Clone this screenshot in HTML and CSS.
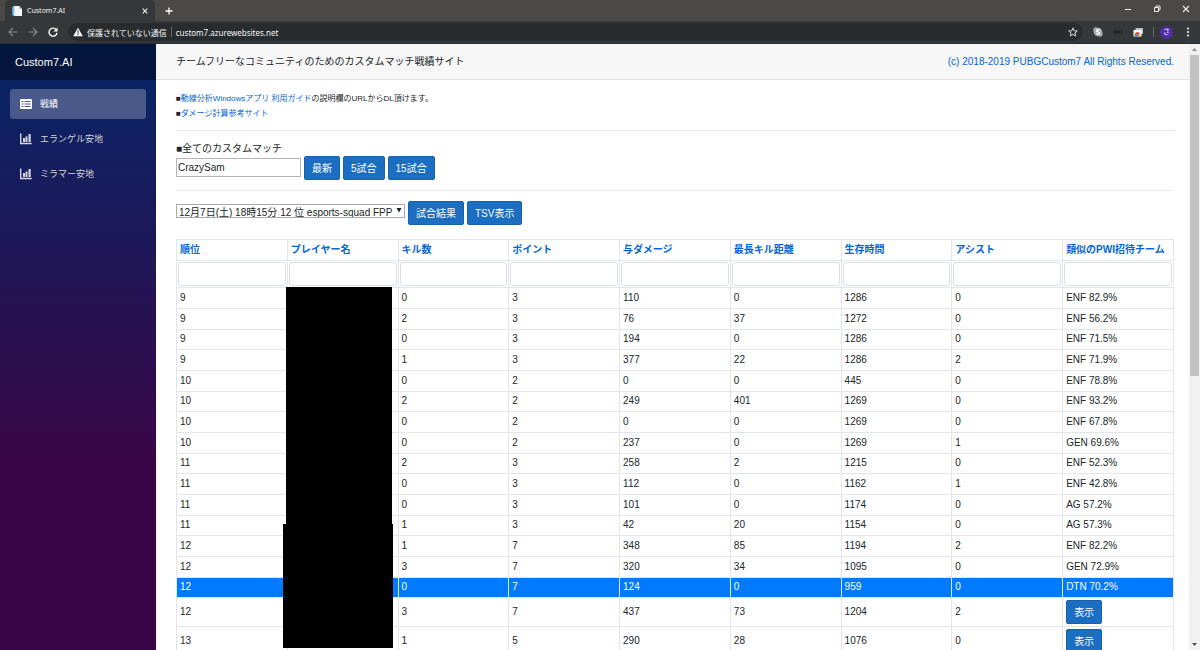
FILE: index.html
```html
<!DOCTYPE html>
<html lang="ja">
<head>
<meta charset="utf-8">
<title>Custom7.AI</title>
<link rel="stylesheet" href="styles.css">
</head>
<body>
<header class="browser">
  <div class="tabstrip">
    <div class="tab">
      <svg class="favicon" viewBox="0 0 12 12"><path d="M1 2l3-1v10l-3-1z" fill="#4f9fd8"/><path d="M3 1h5l3 3v7H3z" fill="#f2f5f7"/><path d="M8 1l3 3H8z" fill="#b9c3ca"/><path d="M3 1v10" stroke="#a9cbe4"/></svg>
      <span class="tab-title">Custom7.AI</span>
      <button class="plain" aria-label="タブを閉じる"><svg class="icon-s" viewBox="0 0 8 8"><path d="M1.7 1.7l4.6 4.6M6.3 1.7L1.7 6.3" stroke="#eee" stroke-width="1.1"/></svg></button>
    </div>
    <button class="plain newtab" aria-label="新しいタブ"><svg class="icon-s" viewBox="0 0 8 8"><path d="M4 .5v7M.5 4h7" stroke="#fff" stroke-width="1.3"/></svg></button>
    <div class="window-buttons">
      <button class="plain" aria-label="最小化"><svg class="icon-s" viewBox="0 0 8 8"><path d="M1 4.5h6" stroke="#eee"/></svg></button>
      <button class="plain" aria-label="元に戻す"><svg class="icon-s" viewBox="0 0 8 8"><path d="M1.5 2.5h4v4h-4zM3 2.500V1h4v4H5.500" fill="none" stroke="#eee"/></svg></button>
      <button class="plain" aria-label="閉じる"><svg class="icon-s" viewBox="0 0 8 8"><path d="M1 1l6 6M7 1L1 7" stroke="#eee" stroke-width="1.1"/></svg></button>
    </div>
  </div>
  <div class="toolbar">
    <button class="plain" aria-label="戻る"><svg class="icon-m" viewBox="0 0 10 10"><path d="M9.500 5H1.200M5 1L1 5l4 4" fill="none" stroke="#85888b" stroke-width="1.1"/></svg></button>
    <button class="plain" aria-label="進む"><svg class="icon-m" viewBox="0 0 10 10"><path d="M.5 5h8.300M5 1l4 4-4 4" fill="none" stroke="#85888b" stroke-width="1.1"/></svg></button>
    <button class="plain" aria-label="再読み込み"><svg class="icon-m" viewBox="0 0 10 10"><path d="M8.300 2.800A4 4 0 1 0 9 5.800" fill="none" stroke="#fff" stroke-width="1.400"/><path d="M9.500.6v4H5.500z" fill="#fff"/></svg></button>
    <div class="address">
      <svg class="icon-m" viewBox="0 0 10 10"><path d="M5 .7L9.800 9.200H.2z" fill="#fff"/><path d="M5 3.600v2.800M5 7.100v1.200" stroke="#292c2f" stroke-width="1.100"/></svg>
      <span class="insecure">保護されていない通信</span>
      <span class="divider"></span>
      <span class="url">custom7.azurewebsites.net</span>
      <button class="plain star" aria-label="ブックマーク"><svg class="icon-m" viewBox="0 0 10 10"><path d="M5 .9l1.200 2.900 3.100.2-2.400 2 .8 3L5 7.400 2.300 9l.8-3L.7 4l3.100-.2z" fill="none" stroke="#e8eaed" stroke-width=".9"/></svg></button>
    </div>
    <div class="extensions">
      <svg class="icon-m" viewBox="0 0 10 10"><circle cx="3" cy="3" r="2.700" fill="#a9a9a9"/><circle cx="7" cy="7" r="2.700" fill="#a9a9a9"/><circle cx="5" cy="5" r="4.300" fill="#a9a9a9"/><path d="M6.700 3.300C5.500 2.300 3.400 2.700 3.500 3.900c.1 1.300 3.100.8 3.100 2.200 0 1.200-2.200 1.400-3.300.4" fill="none" stroke="#fff" stroke-width="1.300"/></svg>
      <svg class="icon-m" viewBox="0 0 10 10"><g fill="none" stroke="#17191b"><path d="M2 2.500Q.3 5 2 7.500M8 2.500Q9.700 5 8 7.500M3.700 3.500Q2.700 5 3.700 6.500M6.300 3.500Q7.300 5 6.300 6.500"/></g><circle cx="5" cy="5" r=".9" fill="#17191b"/></svg>
      <svg class="icon-m" viewBox="0 0 10 10"><path d="M2.500 1H10v6H2.500z" fill="#bfc2c4"/><path d="M.5 3H8.500v6.500h-8z" fill="#fff"/><path d="M2 9.500a2.500 2.500 0 0 1 0-3L4.300 8z" fill="#4a9d55"/><path d="M1.800 6.800a2.800 2.800 0 0 1 5.200 0L4.300 8z" fill="#e04a3d"/><path d="M7 6.800a2.800 2.800 0 0 1 0 2.700H4.300V8z" fill="#f0c13f"/><circle cx="4.400" cy="8.200" r="1.200" fill="#4a80e0"/></svg>
      <span class="divider"></span>
      <span class="avatar">さ</span>
      <svg class="icon-m" viewBox="0 0 10 10"><g fill="#fff"><circle cx="5" cy="1.500" r="1"/><circle cx="5" cy="5" r="1"/><circle cx="5" cy="8.500" r="1"/></g></svg>
    </div>
  </div>
</header>
<div class="app">
  <aside class="sidebar">
    <a class="brand" href="#">Custom7.AI</a>
    <nav class="menu">
      <a class="menu-item active" href="#"><svg class="menu-icon" viewBox="0 0 12 12"><rect y="1" width="12" height="10" rx="1" fill="#fff"/><path d="M1.500 3.500h2M1.500 6h2M1.500 8.500h2M4.500 3.500h6M4.500 6h6M4.500 8.500h6" stroke="#4c5a8c" stroke-width="1.100"/></svg>戦績</a>
      <a class="menu-item" href="#"><svg class="menu-icon" viewBox="0 0 12 12"><path d="M.7.500v10h11" fill="none" stroke="#d7d7e0" stroke-width="1.400"/><path d="M3 5h2V9H3zM5.500 3.500h2V9h-2zM8.500 1h2.200v8H8.500z" fill="#d7d7e0"/></svg>エランゲル安地</a>
      <a class="menu-item" href="#"><svg class="menu-icon" viewBox="0 0 12 12"><path d="M.7.500v10h11" fill="none" stroke="#d7d7e0" stroke-width="1.400"/><path d="M3 5h2V9H3zM5.500 3.500h2V9h-2zM8.500 1h2.200v8H8.500z" fill="#d7d7e0"/></svg>ミラマー安地</a>
    </nav>
  </aside>
  <main class="main">
    <div class="top-row"><span>チームフリーなコミュニティのためのカスタムマッチ戦績サイト</span><a href="#">(c) 2018-2019 PUBGCustom7 All Rights Reserved.</a></div>
    <div class="content">
      <div class="notes">
        <p>■<a href="#">動線分析Windowsアプリ 利用ガイド</a>の説明欄のURLからDL頂けます。</p>
        <p>■<a href="#">ダメージ計算参考サイト</a></p>
      </div>
      <section class="search">
        <label for="player">■全てのカスタムマッチ</label>
        <div class="controls">
          <input class="player" id="player" type="text" value="CrazySam">
          <button class="btn">最新</button>
          <button class="btn">5試合</button>
          <button class="btn">15試合</button>
        </div>
      </section>
      <section class="match">
        <div class="select-box">
          <select aria-label="試合"><option>12月7日(土) 18時15分 12 位 esports-squad FPP</option></select>
          <svg class="arrow" viewBox="0 0 6 6"><path d="M.5 1h5L3 5.500z" fill="#222"/></svg>
        </div>
        <button class="btn">試合結果</button>
        <button class="btn">TSV表示</button>
      </section>
      <div class="grid">
        <table>
          <thead>
            <tr><th><a href="#">順位</a></th><th><a href="#">プレイヤー名</a></th><th><a href="#">キル数</a></th><th><a href="#">ポイント</a></th><th><a href="#">与ダメージ</a></th><th><a href="#">最長キル距離</a></th><th><a href="#">生存時間</a></th><th><a href="#">アシスト</a></th><th><a href="#">類似のPWI招待チーム</a></th></tr>
            <tr class="filters"><td><input aria-label="順位"></td><td><input aria-label="プレイヤー名"></td><td><input aria-label="キル数"></td><td><input aria-label="ポイント"></td><td><input aria-label="与ダメージ"></td><td><input aria-label="最長キル距離"></td><td><input aria-label="生存時間"></td><td><input aria-label="アシスト"></td><td><input aria-label="類似のPWI招待チーム"></td></tr>
          </thead>
          <tbody>
            <tr><td>9</td><td></td><td>0</td><td>3</td><td>110</td><td>0</td><td>1286</td><td>0</td><td>ENF 82.9%</td></tr>
            <tr><td>9</td><td></td><td>2</td><td>3</td><td>76</td><td>37</td><td>1272</td><td>0</td><td>ENF 56.2%</td></tr>
            <tr><td>9</td><td></td><td>0</td><td>3</td><td>194</td><td>0</td><td>1286</td><td>0</td><td>ENF 71.5%</td></tr>
            <tr><td>9</td><td></td><td>1</td><td>3</td><td>377</td><td>22</td><td>1286</td><td>2</td><td>ENF 71.9%</td></tr>
            <tr><td>10</td><td></td><td>0</td><td>2</td><td>0</td><td>0</td><td>445</td><td>0</td><td>ENF 78.8%</td></tr>
            <tr><td>10</td><td></td><td>2</td><td>2</td><td>249</td><td>401</td><td>1269</td><td>0</td><td>ENF 93.2%</td></tr>
            <tr><td>10</td><td></td><td>0</td><td>2</td><td>0</td><td>0</td><td>1269</td><td>0</td><td>ENF 67.8%</td></tr>
            <tr><td>10</td><td></td><td>0</td><td>2</td><td>237</td><td>0</td><td>1269</td><td>1</td><td>GEN 69.6%</td></tr>
            <tr><td>11</td><td></td><td>2</td><td>3</td><td>258</td><td>2</td><td>1215</td><td>0</td><td>ENF 52.3%</td></tr>
            <tr><td>11</td><td></td><td>0</td><td>3</td><td>112</td><td>0</td><td>1162</td><td>1</td><td>ENF 42.8%</td></tr>
            <tr><td>11</td><td></td><td>0</td><td>3</td><td>101</td><td>0</td><td>1174</td><td>0</td><td>AG 57.2%</td></tr>
            <tr><td>11</td><td></td><td>1</td><td>3</td><td>42</td><td>20</td><td>1154</td><td>0</td><td>AG 57.3%</td></tr>
            <tr><td>12</td><td></td><td>1</td><td>7</td><td>348</td><td>85</td><td>1194</td><td>2</td><td>ENF 82.2%</td></tr>
            <tr><td>12</td><td></td><td>3</td><td>7</td><td>320</td><td>34</td><td>1095</td><td>0</td><td>GEN 72.9%</td></tr>
            <tr class="selected"><td>12</td><td></td><td>0</td><td>7</td><td>124</td><td>0</td><td>959</td><td>0</td><td>DTN 70.2%</td></tr>
            <tr><td>12</td><td></td><td>3</td><td>7</td><td>437</td><td>73</td><td>1204</td><td>2</td><td><button class="btn">表示</button></td></tr>
            <tr><td>13</td><td></td><td>1</td><td>5</td><td>290</td><td>28</td><td>1076</td><td>0</td><td><button class="btn">表示</button></td></tr>
          </tbody>
        </table>
        <div class="mask mask-upper"></div>
        <div class="mask mask-lower"></div>
      </div>
    </div>
  </main>
  <div class="scrollbar">
    <svg class="scroll-arrow" viewBox="0 0 11 11"><path d="M3 7h5L5.500 4z" fill="#8b8b8b"/></svg>
    <div class="thumb"></div>
    <svg class="scroll-arrow" viewBox="0 0 11 11"><path d="M3 4h5L5.500 7z" fill="#505050"/></svg>
  </div>
</div>
</body>
</html>
```

FILE: styles.css
```css
* { box-sizing: border-box; }

body {
  margin: 0;
  height: 100vh;
  display: flex;
  flex-direction: column;
  overflow: hidden;
  font-family: "Liberation Sans", "Noto Sans CJK JP", sans-serif;
  font-size: 10px;
  line-height: 15px;
  color: #212529;
}

a { color: #0366d6; text-decoration: none; }
p { margin: 0; }
input, select, button { font: inherit; color: inherit; margin: 0; }
svg { display: block; flex: none; }

/* Browser frame */
.browser {
  flex: none;
  font-family: "Noto Sans", "Noto Sans CJK JP", sans-serif;
  color: #f1f3f4;
  background: #35383b;
  border-bottom: 1px solid #292c2f;
}
.plain {
  display: flex;
  padding: 0;
  border: 0;
  background: none;
}
.icon-s { width: 8px; height: 8px; }
.icon-m { width: 10px; height: 10px; }
.tabstrip {
  display: flex;
  align-items: center;
  height: 21px;
  padding-left: 5px;
  background: #4b4946;
}
.tab {
  display: flex;
  align-items: center;
  gap: 4px;
  width: 150px;
  height: 21px;
  padding: 0 6px;
  border-radius: 5px 5px 0 0;
  background: #35383b;
  font-size: 7px;
}
.favicon { width: 12px; height: 12px; }
.tab-title { flex: 1; }
.newtab { margin-left: 10px; }
.window-buttons {
  display: flex;
  gap: 21px;
  margin-left: auto;
  padding: 0 10px 3px 0;
}
.toolbar {
  display: flex;
  align-items: center;
  gap: 10px;
  height: 22px;
  padding: 0 8px;
}
.address {
  flex: 1;
  display: flex;
  align-items: center;
  gap: 4px;
  height: 18px;
  padding: 0 5px;
  border-radius: 9px;
  background: #292c2f;
  font-size: 8px;
}
.insecure { font-family: "Noto Sans CJK JP", sans-serif; }
.divider { width: 1px; height: 10px; background: #63666a; }
.star { margin-left: auto; }
.extensions {
  display: flex;
  align-items: center;
  gap: 10px;
}
.extensions .divider { margin-right: -4px; }
.avatar {
  width: 13px;
  height: 13px;
  border-radius: 50%;
  background: #512da8;
  font-size: 7px;
  line-height: 12px;
  text-align: center;
}
.avatar + .icon-m { margin-right: -1px; }

/* Page */
.app { flex: 1; display: flex; min-height: 0; }
.sidebar {
  flex: none;
  width: 156px;
  background: linear-gradient(180deg, #052767 0%, #3a0647 70%);
}
.brand {
  display: block;
  padding: 0 15px;
  background: rgba(0, 0, 0, 0.4);
  color: #fff;
  font-size: 11px;
  line-height: 36px;
}
.menu {
  display: flex;
  flex-direction: column;
  gap: 5px;
  padding: 9px 10px;
}
.menu-item {
  display: flex;
  align-items: center;
  gap: 8px;
  height: 30px;
  padding: 0 10px;
  border-radius: 3px;
  color: #d7d7d7;
  font-size: 9px;
}
.menu-item.active { background: rgba(255, 255, 255, 0.25); color: #fff; }
.menu-icon { width: 12px; height: 12px; }

.main { flex: 1; min-width: 0; }
.top-row {
  display: flex;
  justify-content: space-between;
  padding: 0 15px 0 20px;
  border-bottom: 1px solid #e3e3e3;
  background: #f7f7f7;
  line-height: 35px;
}
.content { padding: 11px 15px 0 20px; }
.notes, .search { border-bottom: 1px solid #e8e8e8; }
.notes { padding-bottom: 9px; font-size: 8px; }
.search { padding: 10px 0; }
.search label { display: block; }
.controls, .match { display: flex; align-items: center; gap: 3px; }
.player {
  width: 125px;
  height: 19px;
  padding: 0 1px;
  border: 1px solid #b4b4b4;
}
.controls .player { margin-bottom: 2px; }
.btn {
  height: 24px;
  padding: 0 7px;
  border: 1px solid #1861ac;
  border-radius: 2px;
  background: #1b6ec2;
  color: #fff;
}
.controls .btn:nth-of-type(1) { padding: 0 7px; }
.match { padding: 10px 0 14px; }
.select-box { position: relative; display: flex; margin-bottom: 5px; }
.select-box select {
  appearance: none;
  width: 229px;
  height: 14px;
  padding: 0 9px 0 2px;
  border: 1px solid #a9a9a9;
  border-radius: 0;
  background: #fff;
  overflow: hidden;
}
.arrow {
  position: absolute;
  top: 3px;
  right: 3px;
  width: 6px;
  height: 6px;
  pointer-events: none;
}

.grid { position: relative; }
table {
  width: 100%;
  border-collapse: collapse;
  table-layout: fixed;
}
th, td {
  height: 21px;
  padding: 0 3px 2px;
  border: 1px solid #e3e6e9;
  text-align: left;
  vertical-align: middle;
  white-space: nowrap;
}
tbody tr:nth-child(3n) td { height: 20px; }
.filters td { padding: 0 1px; height: 27px; }
.filters input {
  display: block;
  width: 100%;
  height: 24px;
  border: 1px solid #dadfe3;
  border-radius: 3px;
}
.selected { background: #007bff; color: #fff; }
tbody td:has(.btn) { height: 29px; padding-bottom: 0; }
td .btn { display: block; }
.mask { position: absolute; background: #000; }
.mask-upper { top: 48px; left: 11%; width: 10.6%; height: 238px; }
.mask-lower { top: 285px; left: 10.7%; width: 11%; height: 124px; }

.scrollbar {
  flex: none;
  display: flex;
  flex-direction: column;
  width: 11px;
  background: #f1f1f1;
}
.scroll-arrow { width: 11px; height: 11px; }
.thumb { height: 53%; margin: 0 1px auto; background: #c1c1c1; }
```
